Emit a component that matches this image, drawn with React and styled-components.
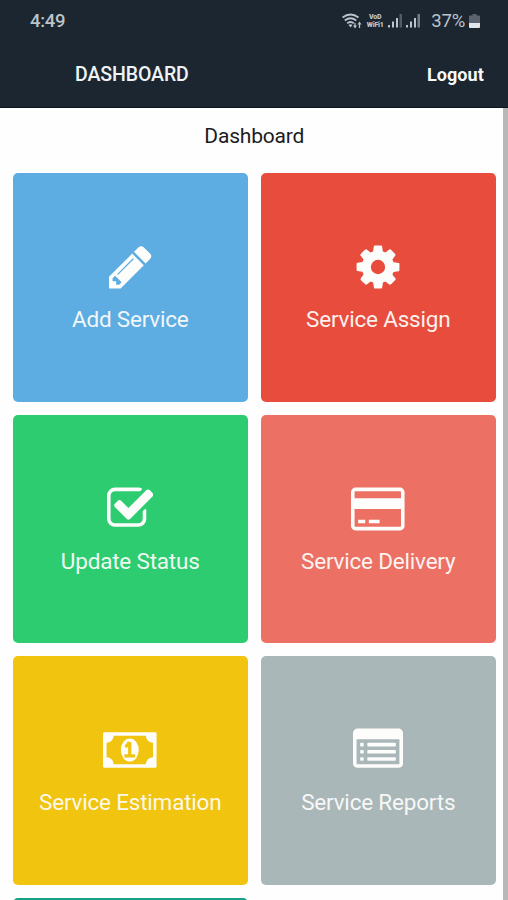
import React from "react";
import styled, { createGlobalStyle } from "styled-components";

const GlobalStyle = createGlobalStyle`
  * {
    box-sizing: border-box;
  }

  body {
    margin: 0;
    background: #fefefe;
    font-family: Roboto, "Liberation Sans", sans-serif;
  }
`;

const Screen = styled.div`
  display: flex;
  flex-direction: column;
  width: 508px;
  height: 900px;
  overflow: hidden;
`;

const Header = styled.header`
  flex: none;
  height: 107.5px;
  background: #1b2631;
  border-bottom: 1px solid #0e141d;
`;

const StatusBar = styled.div`
  display: flex;
  align-items: center;
  justify-content: space-between;
  height: 41px;
  padding: 0 28px 0 30px;
  color: #bcc3ca;
`;

const Clock = styled.span`
  font-size: 18.5px;
  font-weight: 500;
  letter-spacing: -0.3px;
`;

const StatusIcons = styled.div`
  display: flex;
  align-items: center;
  gap: 3px;
`;

const Carrier = styled.div`
  display: flex;
  flex-direction: column;
  align-items: center;
  width: 20px;
  font-size: 7px;
  font-weight: 900;
  line-height: 8px;
  letter-spacing: -0.2px;
  white-space: nowrap;
`;

const Percent = styled.span`
  margin: 1px 1px 0 7px;
  font-size: 18.5px;
  letter-spacing: -0.2px;
`;

const TitleBar = styled.div`
  display: flex;
  align-items: center;
  justify-content: space-between;
  height: 64px;
  padding: 2px 24px 0 75px;
  color: #eef3f5;
`;

const Title = styled.h1`
  margin: 0;
  font-size: 19.5px;
  font-weight: 500;
  letter-spacing: -0.1px;
`;

const Logout = styled.button`
  padding: 0;
  border: 0;
  background: none;
  color: #f7fafb;
  font-family: inherit;
  font-size: 18px;
  font-weight: 700;
  letter-spacing: 0.1px;
`;

const Body = styled.div`
  display: flex;
  flex: 1;
  min-height: 0;
`;

const Content = styled.main`
  flex: 1;
  overflow: hidden;
  padding: 0 7px 0 12.5px;
`;

const ScrollThumb = styled.div`
  flex: none;
  width: 5px;
  background: #b8b8b8;
`;

const PageTitle = styled.h2`
  margin: 0;
  height: 65.9px;
  padding-top: 13.5px;
  color: #1c1c1c;
  font-size: 21px;
  font-weight: 400;
  line-height: 30px;
  letter-spacing: -0.2px;
  text-align: center;
`;

const Grid = styled.div`
  display: grid;
  grid-template-columns: 1fr 1fr;
  grid-auto-rows: 228.5px;
  gap: 13px 12.5px;
`;

const Tile = styled.div`
  display: flex;
  flex-direction: column;
  align-items: center;
  justify-content: center;
  gap: 13px;
  border-radius: 5px;
  background: ${(props) => props.$color};
  color: #fdfdfb;
`;

const TileIcon = styled.svg`
  display: block;
  height: 50px;
  fill: currentColor;
`;

const Label = styled.span`
  font-size: 22.5px;
  line-height: 28px;
  letter-spacing: -0.2px;
  white-space: nowrap;
  opacity: 0.93;
`;

const PencilIcon = () => (
  <TileIcon viewBox="128 0 1536 1792">
    <path d="M491 1536l91-91-235-235-91 91v107h128v128h107zm523-928q0-22-22-22-10 0-17 7l-542 542q-7 7-7 17 0 22 22 22 10 0 17-7l542-542q7-7 7-17zm-54-192l416 416-832 832h-416v-416zm683 96q0 53-37 90l-166 166-416-416 166-165q36-38 90-38 53 0 91 38l235 234q37 39 37 91z" />
  </TileIcon>
);

const CogIcon = () => (
  <TileIcon viewBox="0 0 1792 1792">
    <path d="M1152 896q0-106-75-181t-181-75-181 75-75 181 75 181 181 75 181-75 75-181zm512-109v222q0 12-8 23t-20 13l-185 28q-19 54-39 91 35 50 107 138 10 12 10 25t-9 23q-27 37-99 108t-94 71q-12 0-26-9l-138-108q-44 23-91 38-16 136-29 186-7 28-36 28h-222q-14 0-24.5-8.5t-11.5-21.5l-28-184q-49-16-90-37l-141 107q-10 9-25 9-14 0-25-11-126-114-165-168-7-10-7-23 0-12 8-23 15-21 51-66.5t54-70.5q-27-50-41-99l-183-27q-13-2-21-12.5t-8-23.5v-222q0-12 8-23t19-13l186-28q14-46 39-92-40-57-107-138-10-12-10-24 0-10 9-23 26-36 98.5-107.5t94.5-71.5q13 0 26 10l138 107q44-23 91-38 16-136 29-186 7-28 36-28h222q14 0 24.5 8.5t11.5 21.5l28 184q49 16 90 37l142-107q9-9 24-9 13 0 25 10 129 119 165 170 7 8 7 22 0 12-8 23-15 21-51 66.5t-54 70.5q26 50 41 98l183 28q13 2 21 12.5t8 23.5z" />
  </TileIcon>
);

const CheckIcon = () => (
  <TileIcon viewBox="64 0 1664 1792">
    <path d="M1472 930v318q0 119-84.5 203.5t-203.5 84.5h-832q-119 0-203.5-84.5t-84.5-203.5v-832q0-119 84.5-203.5t203.5-84.5h832q63 0 117 25 15 7 18 23 3 17-9 29l-49 49q-10 10-23 10-3 0-9-2-23-6-45-6h-832q-66 0-113 47t-47 113v832q0 66 47 113t113 47h832q66 0 113-47t47-113v-254q0-13 9-22l64-64q10-10 23-10 6 0 12 3 20 8 20 29zm231-489l-814 814q-24 24-57 24t-57-24l-430-430q-24-24-24-57t24-57l110-110q24-24 57-24t57 24l263 263 647-647q24-24 57-24t57 24l110 110q24 24 24 57t-24 57z" />
  </TileIcon>
);

const CardIcon = () => (
  <TileIcon viewBox="0 0 1920 1792">
    <path d="M1760 128q66 0 113 47t47 113v1216q0 66-47 113t-113 47h-1600q-66 0-113-47t-47-113v-1216q0-66 47-113t113-47h1600zm-1600 128q-13 0-22.5 9.5t-9.5 22.5v224h1664v-224q0-13-9.5-22.5t-22.5-9.5h-1600zm1600 1280q13 0 22.5-9.5t9.5-22.5v-608h-1664v608q0 13 9.5 22.5t22.5 9.5h1600zm-1504-128v-128h256v128h-256zm384 0v-128h384v128h-384z" />
  </TileIcon>
);

const MoneyIcon = ({ cutout }) => (
  <TileIcon viewBox="0 0 1920 1792">
    <rect y="256" width="1920" height="1280" rx="50" />
    <path
      fill={cutout}
      d="M384 384h1152q0 106 75 181t181 75v512q-106 0-181 75t-75 181h-1152q0-106-75-181t-181-75v-512q106 0 181-75t75-181z"
    />
    <ellipse cx="960" cy="896" rx="320" ry="416" />
    <path
      fill="none"
      stroke={cutout}
      strokeWidth="116"
      d="M800 785q95-70 144-177M958 608v500M768 1104h384"
    />
  </TileIcon>
);

const ListIcon = ({ cutout }) => (
  <TileIcon viewBox="0 0 1792 1792">
    <rect y="128" width="1792" height="1408" rx="160" />
    <rect x="128" y="512" width="1536" height="896" rx="32" fill={cutout} />
    {[640, 896, 1152].map((y) => (
      <g key={y}>
        <rect x="256" y={y} width="128" height="128" rx="32" />
        <rect x="512" y={y} width="1024" height="128" rx="32" />
      </g>
    ))}
  </TileIcon>
);

const WifiIcon = () => (
  <svg width="20" height="16" fill="none" stroke="currentColor">
    <path strokeWidth="1.8" d="M.5 4.500Q8.500-1.500 16.500 4.500M2.800 7.500Q8.500 3 14.200 7.500M5.200 10.300Q8.500 7.700 11.800 10.300" />
    <path fill="currentColor" stroke="none" d="M6.500 12Q8.500 10.500 10.500 12L8.500 14.500zM11 12.500h4l-2 3zM15.500 11.500h4l-2-3z" />
    <path strokeWidth="1.2" d="M13 10v3M17.500 11v4" />
  </svg>
);

const SignalIcon = ({ strong }) => (
  <svg width="15" height="15" fill="currentColor">
    <rect x="0" y="12" width="2" height="2.500" />
    <rect x="4" y="8.500" width="2" height="6" />
    <rect x="8" y="5" width="2" height="9.500" />
    <rect x="11.500" y="1" width="2.500" height="13.500" opacity={strong ? 0.55 : 0.35} />
  </svg>
);

const BatteryIcon = () => (
  <svg width="11" height="16" fill="currentColor">
    <path opacity="0.4" d="M3.500 1h4v1.500H10a1 1 0 0 1 1 1V10H0V3.500a1 1 0 0 1 1-1h2.500z" />
    <path fill="#e3e7e9" d="M0 10h11v4a1 1 0 0 1-1 1H1a1 1 0 0 1-1-1z" />
  </svg>
);

const tiles = [
  { label: "Add Service", color: "#5dade2", Icon: PencilIcon },
  { label: "Service Assign", color: "#e74c3c", Icon: CogIcon },
  { label: "Update Status", color: "#2ecc71", Icon: CheckIcon },
  { label: "Service Delivery", color: "#ec7063", Icon: CardIcon },
  { label: "Service Estimation", color: "#f1c40f", Icon: MoneyIcon },
  { label: "Service Reports", color: "#aab7b8", Icon: ListIcon },
];

export default function App() {
  return (
    <Screen>
      <GlobalStyle />
      <Header>
        <StatusBar>
          <Clock>4:49</Clock>
          <StatusIcons>
            <WifiIcon />
            <Carrier>
              <span>VoD</span>
              <span>WiFi1</span>
            </Carrier>
            <SignalIcon />
            <SignalIcon strong />
            <Percent>37%</Percent>
            <BatteryIcon />
          </StatusIcons>
        </StatusBar>
        <TitleBar>
          <Title>DASHBOARD</Title>
          <Logout>Logout</Logout>
        </TitleBar>
      </Header>
      <Body>
        <Content>
          <PageTitle>Dashboard</PageTitle>
          <Grid>
            {tiles.map(({ label, color, Icon }) => (
              <Tile key={label} $color={color}>
                <Icon cutout={color} />
                <Label>{label}</Label>
              </Tile>
            ))}
            <Tile $color="#16a085" />
          </Grid>
        </Content>
        <ScrollThumb />
      </Body>
    </Screen>
  );
}
